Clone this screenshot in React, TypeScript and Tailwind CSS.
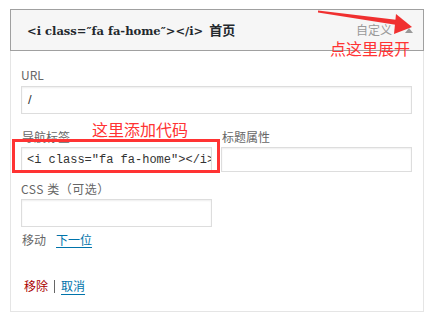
import React from "react";

const cjk = { fontFamily: '"Noto Sans CJK SC", "Liberation Sans", sans-serif' };

export default function App() {
  return (
    <div className="w-[434px] h-[312px] bg-white relative overflow-hidden pl-[10px] pt-[9px]" style={cjk}>
      <div className="w-[414px]">
        <div className="h-[42px] border border-[#a0a0a0] bg-[#f6f6f6] flex items-center pl-[16px] pr-[10px]">
          <span className="text-[11.5px] font-bold text-[#23282d] leading-none whitespace-nowrap" style={{ fontFamily: '"DejaVu Serif", "Noto Sans CJK SC", serif' }}>
            {'<i class=″fa fa-home″></i> '}
            <span className="text-[13px] ml-[2px]" style={cjk}>首页</span>
          </span>
          <span className="ml-auto text-[12px] text-[#999] leading-none">自定义</span>
          <span className="ml-[13px] w-0 h-0 border-l-[4px] border-r-[4px] border-b-[5px] border-l-transparent border-r-transparent border-b-[#999] mt-[1px]"></span>
        </div>
        <div className="h-[261px] border-x border-b border-[#e5e5e5] pl-[10px] pr-[11px] pt-[16px]">
          <div className="text-[12px] leading-[16px] text-[#666]">URL</div>
          <div className="mt-[3px] h-[28px] border border-[#ddd] shadow-[inset_0_1px_2px_rgba(0,0,0,0.07)] flex items-center px-[6px] text-[13px] text-[#333]" style={{ fontFamily: '"Liberation Sans", sans-serif' }}>
            /
          </div>
          <div className="mt-[15px] grid grid-cols-2 gap-x-[9px]">
            <div>
              <div className="text-[12px] leading-[16px] text-[#666] pl-[1px]">导航标签</div>
              <div className="mt-[2px] h-[25px] border border-[#ddd] shadow-[inset_0_1px_2px_rgba(0,0,0,0.07)] flex items-center pl-[5px] overflow-hidden whitespace-nowrap text-[12px] text-[#333]" style={{ fontFamily: '"Liberation Mono", "DejaVu Sans Mono", monospace' }}>
                {'<i class=″fa fa-home″></i>'}
              </div>
            </div>
            <div>
              <div className="text-[12px] leading-[16px] text-[#666] pl-[1px]">标题属性</div>
              <div className="mt-[2px] h-[25px] border border-[#ddd] shadow-[inset_0_1px_2px_rgba(0,0,0,0.07)]"></div>
            </div>
          </div>
          <div className="mt-[9px] text-[12px] leading-[16px] text-[#666] tracking-[0.5px]">CSS 类（可选）</div>
          <div className="mt-[2px] w-[191px] h-[28px] border border-[#ddd] shadow-[inset_0_1px_2px_rgba(0,0,0,0.07)]"></div>
          <div className="mt-[5px] flex items-center text-[12px] leading-[16px] pl-[1px]">
            <span className="text-[#666]">移动</span>
            <span className="ml-[10px] text-[#0073aa] underline underline-offset-[2px]">下一位</span>
          </div>
          <div className="mt-[30px] flex items-center text-[12px] leading-[16px] pl-[3px]">
            <span className="text-[#a00]">移除</span>
            <span className="mx-[6px] w-px h-[13px] bg-[#666]"></span>
            <span className="text-[#0073aa] underline underline-offset-[3px]">取消</span>
          </div>
        </div>
      </div>

      {/* annotations */}
      <svg className="absolute left-0 top-0" width="434" height="312">
        <polygon points="318,10.5 318,12.5 397,25 398,20" fill="#f03030" />
        <polygon points="396,14 412,27 394,34" fill="#f03030" />
      </svg>
      <div className="absolute left-[330px] top-[38px] text-[16px] leading-[20px] text-[#f33]">点这里展开</div>
      <div className="absolute left-[92px] top-[119px] text-[16px] leading-[20px] text-[#f33]">这里添加代码</div>
      <div className="absolute left-[12px] top-[139px] w-[208px] h-[34px] border-[3px] border-[#f33]"></div>
    </div>
  );
}
